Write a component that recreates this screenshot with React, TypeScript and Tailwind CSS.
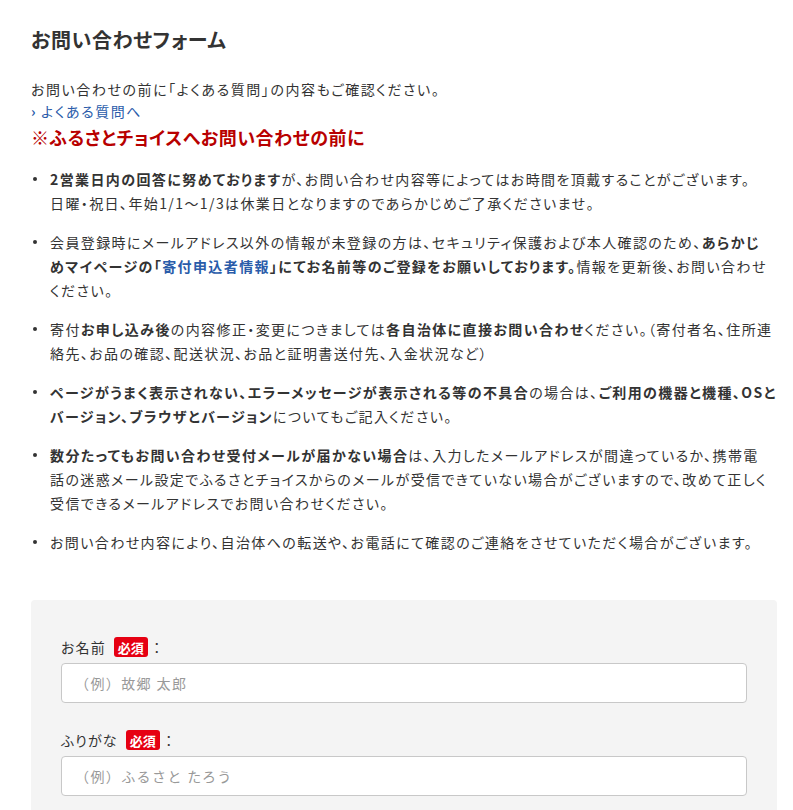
import React from 'react';

const font = "[font-family:'Noto_Sans_CJK_JP','Noto_Sans',sans-serif]";

interface FieldProps {
  label: string;
  placeholder: string;
}

const Field: React.FC<FieldProps> = ({ label, placeholder }) => {
  return (
    <div className="flex flex-col gap-[4px]">
      <label className="flex items-center text-[14px] leading-[24px] text-[#333] tracking-[0.08em]">
        {label}
        <span className="ml-[8px] inline-flex h-[20px] items-center rounded-[3px] bg-[#e60012] px-[4px] text-[13px] font-bold leading-none tracking-normal text-white">
          必須
        </span>
        <span className="ml-[2px] [font-feature-settings:normal]">：</span>
      </label>
      <input
        type="text"
        placeholder={placeholder}
        className="h-[40px] w-full rounded-[4px] border border-[#c8c8c8] bg-white px-[13px] text-[14px] tracking-[0.1em] text-[#333] placeholder:text-[#999] outline-none [font-feature-settings:normal]"
      />
    </div>
  );
};

const Notice: React.FC<{ children: React.ReactNode }> = ({ children }) => (
  <li className="flex gap-[13px]">
    <span className="ml-[2px] mt-[10px] h-[4px] w-[4px] shrink-0 rounded-full bg-[#333]" />
    <p className="flex-1">{children}</p>
  </li>
);

export default function App() {
  return (
    <div className={`${font} min-h-[810px] bg-white text-[#333] [font-feature-settings:'palt']`}>
      <div className="ml-[31px] w-[746px] pt-[25px]">
        <h2 className="text-[20px] font-bold leading-[30px] tracking-[0.03em]">お問い合わせフォーム</h2>

        <p className="mt-[23px] text-[14px] leading-[22px] tracking-[0.11em]">
          お問い合わせの前に「よくある質問」の内容もご確認ください。
        </p>
        <a href="#" className="block text-[14px] leading-[22px] tracking-[0.11em] text-[#2a5caa]">
          <span className="mr-[4px] font-bold">›</span>よくある質問へ
        </a>
        <h3 className="text-[18px] font-bold leading-[30px] tracking-[0.03em] text-[#b80000]">
          ※ふるさとチョイスへお問い合わせの前に
        </h3>

        {/* line breaks follow the page's own wrap points; the list runs a bit wider than the form */}
        <ul className="mt-[15px] flex w-[760px] flex-col gap-[15px] text-[14px] leading-[24px] tracking-[0.1em]">
          <Notice>
            <b>2営業日内の回答に努めております</b>が、お問い合わせ内容等によってはお時間を頂戴することがございます。
            <br />
            日曜・祝日、年始1/1〜1/3は休業日となりますのであらかじめご了承くださいませ。
          </Notice>
          <Notice>
            会員登録時にメールアドレス以外の情報が未登録の方は、セキュリティ保護および本人確認のため、
            <b>
              あらかじ
              <br />
              めマイページの「<span className="text-[#2a5caa]">寄付申込者情報</span>」にてお名前等のご登録をお願いしております。
            </b>
            情報を更新後、お問い合わせ
            <br />
            ください。
          </Notice>
          <Notice>
            寄付<b>お申し込み後</b>の内容修正・変更につきましては<b>各自治体に直接お問い合わせ</b>
            ください。（寄付者名、住所連
            <br />
            絡先、お品の確認、配送状況、お品と証明書送付先、入金状況など）
          </Notice>
          <Notice>
            <b>ページがうまく表示されない、エラーメッセージが表示される等の不具合</b>の場合は、
            <b>
              ご利用の機器と機種、OSと
              <br />
              バージョン、ブラウザとバージョン
            </b>
            についてもご記入ください。
          </Notice>
          <Notice>
            <b>数分たってもお問い合わせ受付メールが届かない場合</b>
            は、入力したメールアドレスが間違っているか、携帯電
            <br />
            話の迷惑メール設定でふるさとチョイスからのメールが受信できていない場合がございますので、改めて正しく
            <br />
            受信できるメールアドレスでお問い合わせください。
          </Notice>
          <Notice>
            お問い合わせ内容により、自治体への転送や、お電話にて確認のご連絡をさせていただく場合がございます。
          </Notice>
        </ul>

        <form className="mt-[46px] flex flex-col gap-[25px] rounded-[4px] bg-[#f4f4f4] px-[30px] pt-[35px] pb-[40px]">
          <Field label="お名前" placeholder="（例）故郷 太郎" />
          <Field label="ふりがな" placeholder="（例）ふるさと たろう" />
        </form>
      </div>
    </div>
  );
}
